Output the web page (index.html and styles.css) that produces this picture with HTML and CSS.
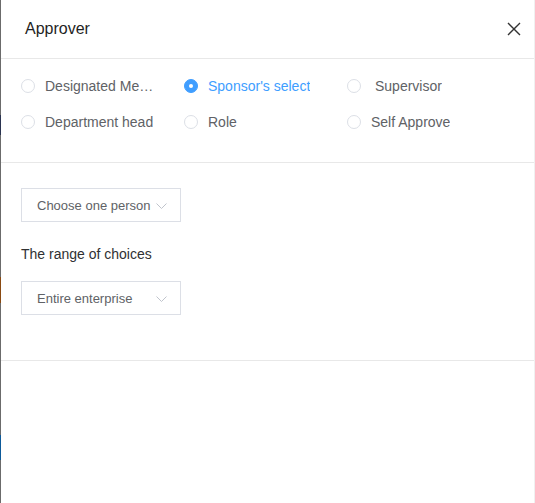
FILE: index.html
```html
<!DOCTYPE html>
<html>
<head>
<meta charset="utf-8">
<link rel="stylesheet" href="styles.css">
</head>
<body>
<div class="page">
  <div class="backdrop">
    <span class="mark mark-navy"></span>
    <span class="mark mark-brown"></span>
    <span class="mark mark-blue"></span>
  </div>
  <div class="dialog">
    <div class="header">
      <span class="title">Approver</span>
      <svg class="close" width="14" height="14" viewBox="0 0 14 14"><path d="M1 1 L13 13 M13 1 L1 13" stroke="#333" stroke-width="1.4" fill="none"/></svg>
    </div>
    <div class="types">
      <label class="radio"><span class="dot"></span><span class="text">Designated Member</span></label>
      <label class="radio checked"><span class="dot"></span><span class="text">Sponsor's select</span></label>
      <label class="radio"><span class="dot"></span><span class="text sup">Supervisor</span></label>
      <label class="radio"><span class="dot"></span><span class="text">Department head</span></label>
      <label class="radio"><span class="dot"></span><span class="text">Role</span></label>
      <label class="radio"><span class="dot"></span><span class="text">Self Approve</span></label>
    </div>
    <div class="body">
      <div class="select"><span>Choose one person</span><svg class="chev" width="11" height="6" viewBox="0 0 11 6"><path d="M0.5 0.5 L5.5 5.5 L10.5 0.5" stroke="#c0c4cc" stroke-width="1" fill="none"/></svg></div>
      <div class="label">The range of choices</div>
      <div class="select"><span>Entire enterprise</span><svg class="chev" width="11" height="6" viewBox="0 0 11 6"><path d="M0.5 0.5 L5.5 5.5 L10.5 0.5" stroke="#c0c4cc" stroke-width="1" fill="none"/></svg></div>
    </div>
    <div class="footer"></div>
  </div>
</div>
</body>
</html>
```
FILE: styles.css
```css
* { box-sizing: border-box; }
html, body { margin: 0; padding: 0; background: #fff; }
body { font-family: "Liberation Sans", Arial, sans-serif; }
.page { display: flex; width: 535px; height: 503px; overflow: hidden; }
.backdrop { width: 1px; flex: none; background: #6b6b6b; display: flex; flex-direction: column; }
.mark { display: block; width: 1px; }
.mark-navy { margin-top: 115px; height: 20px; background: #2a3350; }
.mark-brown { margin-top: 142px; height: 26px; background: #8a4a12; }
.mark-blue { margin-top: 132px; height: 25px; background: #0d5a9a; }
.dialog { flex: 1; display: flex; flex-direction: column; background: #fff; border-right: 1px solid #f0f0f0; }
.header { height: 59px; border-bottom: 1px solid #e8e8e8; display: flex; align-items: center; justify-content: space-between; padding: 0 13px 0 24px; flex: none; }
.title { font-size: 16px; color: #1f1f1f; }
.close { display: block; margin-top: -1px; }
.types { display: grid; grid-template-columns: 163px 163px 163px; grid-auto-rows: 36px; padding: 9px 0 22px 20px; border-bottom: 1px solid #e8e8e8; flex: none; }
.radio { display: flex; align-items: center; font-size: 14px; color: #606266; }
.dot { width: 14px; height: 14px; border: 1px solid #dcdfe6; border-radius: 50%; margin-right: 10px; flex: none; position: relative; background: #fff; }
.radio.checked .dot { background: #409eff; border-color: #409eff; }
.radio.checked .dot::after { content: ""; position: absolute; width: 4px; height: 4px; border-radius: 50%; background: #fff; left: 4px; top: 4px; }
.radio.checked .text { color: #409eff; }
.text { white-space: nowrap; overflow: hidden; text-overflow: ellipsis; max-width: 110px; }
.text.sup { margin-left: 4px; }
.body { padding: 25px 0 45px 20px; border-bottom: 1px solid #e8e8e8; flex: none; }
.select { width: 160px; height: 34px; border: 1px solid #dcdfe6; display: flex; align-items: center; justify-content: space-between; padding: 0 13px 0 15px; font-size: 13px; color: #606266; }
.chev { display: block; margin-top: 1px; }
.label { font-size: 14px; color: #303133; line-height: 20px; margin: 22px 0 17px; }
.footer { flex: 1; }
```
